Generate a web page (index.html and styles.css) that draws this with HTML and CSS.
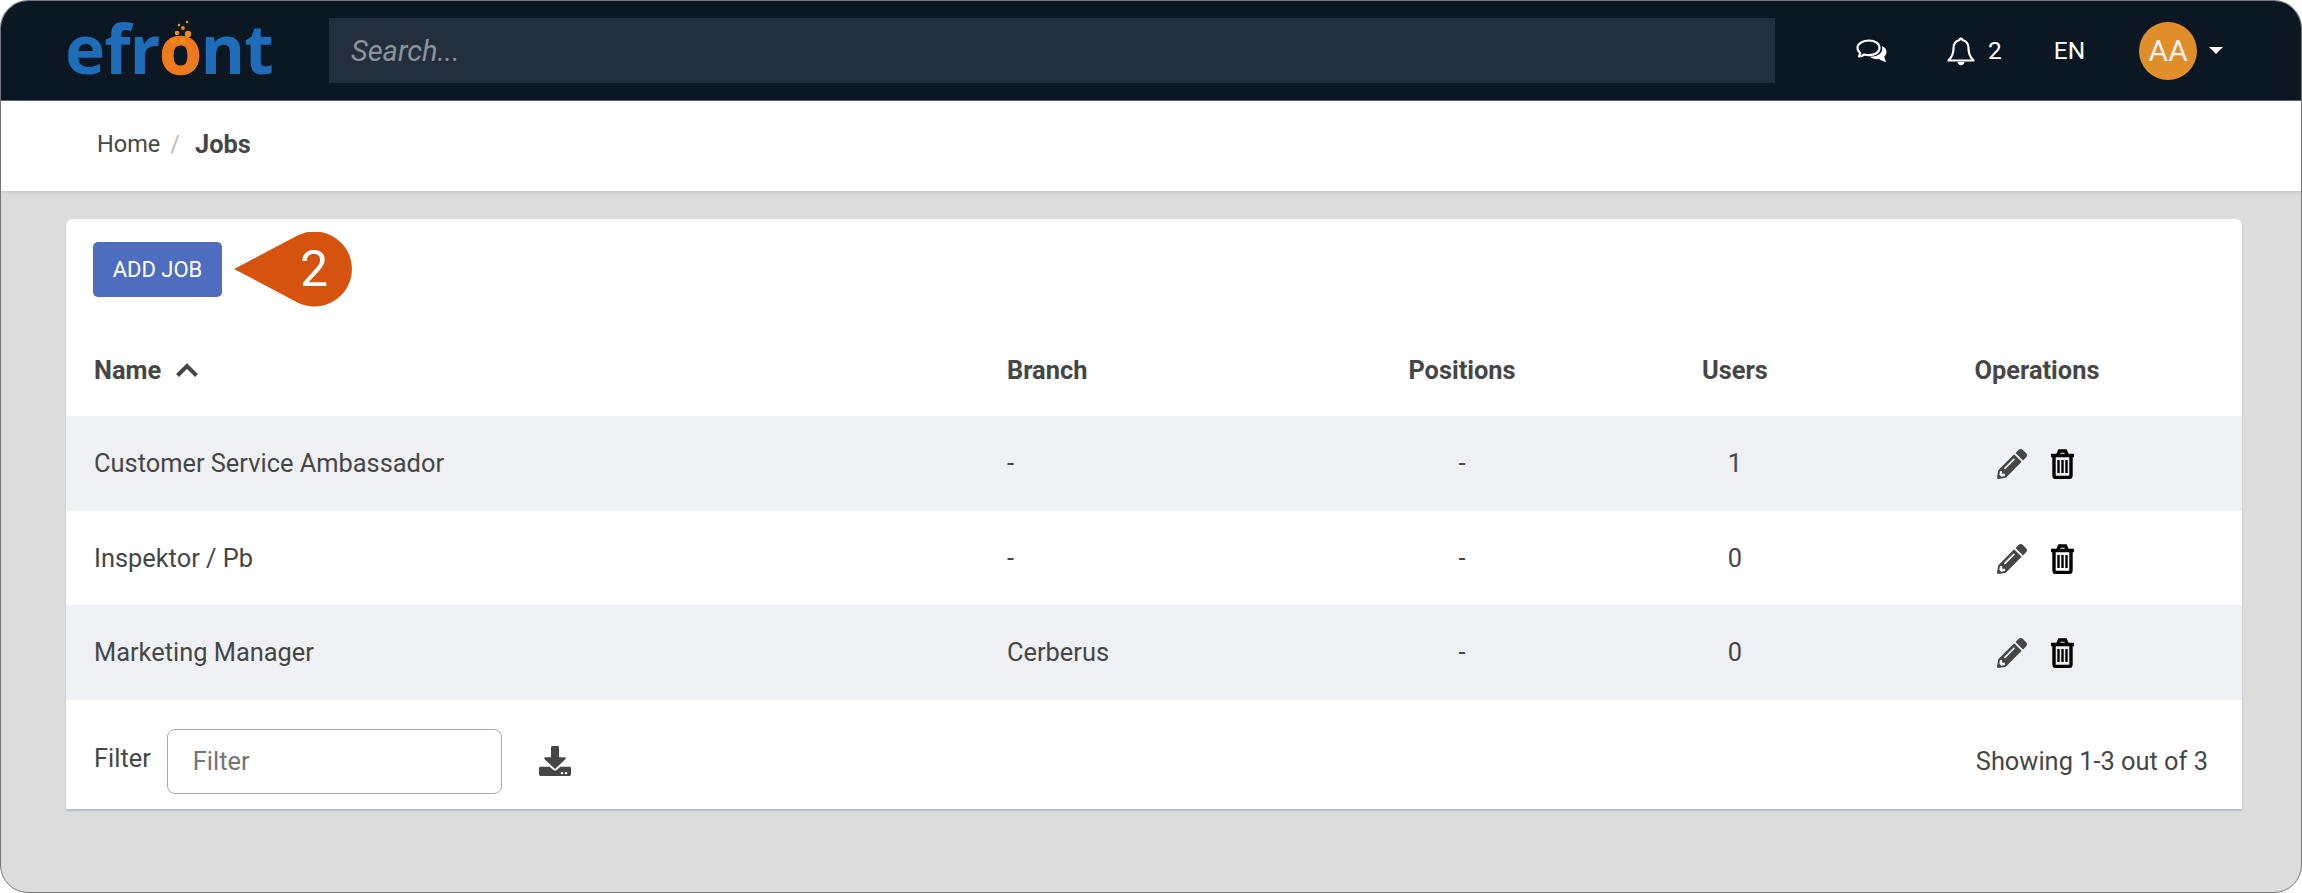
FILE: index.html
```html
<!DOCTYPE html>
<html lang="en">
<head>
<meta charset="utf-8">
<title>Jobs</title>
<link rel="stylesheet" href="styles.css">
</head>
<body>
<div class="frame">
  <header class="topbar">
    <div class="logo">
      <span class="logo-text">efr<span class="logo-o">o</span>nt</span>
      <svg class="logo-dots" viewBox="0 0 40 30" aria-hidden="true">
        <circle cx="29" cy="16" r="3.200"/><circle cx="18" cy="15" r="2.300"/><circle cx="24" cy="10" r="1.900"/><circle cx="20" cy="7" r="1.300"/><circle cx="28" cy="4" r="1.300"/>
        <circle cx="14" cy="23" r="3"/><circle cx="24" cy="23" r="3"/>
      </svg>
    </div>
    <div class="search">Search...</div>
    <div class="top-actions">
      <svg class="ic-comments" viewBox="0 0 32 24" aria-hidden="true">
        <path class="ic-line" d="M13 1.500C6.800 1.500 1.500 4.500 1.500 9c0 2 1 3.700 2.600 5L3 17.500c2.200-.3 3.900-1.100 5.200-2 1.500.4 3.100.6 4.800.6 6.200 0 10.500-3 10.500-7.100S19.200 1.500 13 1.500z"/>
        <path class="ic-fill" d="M26 7c3.200 1.300 4.500 3.500 4.500 6 0 1.900-.9 3.400-2.300 4.600l1.800 5.400c-2.800-.5-5.200-1.700-7-3-2.800.5-6.800-.1-9-2.400 7 .2 14-3 12-10.600z"/>
      </svg>
      <div class="bell-group">
        <svg class="ic-bell" viewBox="0 0 28 30" aria-hidden="true">
          <path class="ic-line" d="M14 2.500c-1 0-1.500.8-1.500 1.500C8 5 6.500 8.500 6.500 12.500c0 5-1.500 8.500-5 12h25c-3.500-3.500-5-7-5-12 0-4-1.500-7.500-6-8.500 0-.7-.5-1.500-1.500-1.500z"/>
          <path class="ic-fill" d="M10.500 26h7c-.3 2-1.700 3.200-3.500 3.200S10.800 28 10.500 26z"/>
        </svg>
        <span class="top-text">2</span>
      </div>
      <span class="top-text lang">EN</span>
      <div class="user">
        <span class="avatar">AA</span>
        <span class="caret"></span>
      </div>
    </div>
  </header>

  <nav class="crumbs">
    <span class="crumb">Home</span>
    <span class="crumb-sep">/</span>
    <strong class="crumb-current">Jobs</strong>
  </nav>

  <main class="content">
    <section class="card">
      <div class="card-top">
        <button class="btn-add" type="button">ADD JOB</button>
        <div class="callout">
          <svg class="callout-shape" viewBox="0 0 119 76" aria-hidden="true">
            <path d="M0 37 L63 3.800 A37.500 37.500 0 1 1 63 70.200 Z"/>
          </svg>
          <span class="callout-num">2</span>
        </div>
      </div>

      <div class="row row-head">
        <div class="name-head">Name
          <svg class="sort" viewBox="0 0 24 16" aria-hidden="true"><path d="M2.500 13.500 12 4l9.500 9.500"/></svg>
        </div>
        <div>Branch</div>
        <div class="center">Positions</div>
        <div class="center">Users</div>
        <div class="center">Operations</div>
      </div>

      <div class="row row-alt">
        <div>Customer Service Ambassador</div><div>-</div><div class="center">-</div><div class="center">1</div>
        <div class="ops">
          <svg class="ic-pencil" viewBox="0 0 512 512" aria-hidden="true"><path d="M497.900 142.100l-46.100 46.100c-4.700 4.700-12.300 4.700-17 0l-111-111c-4.700-4.700-4.700-12.300 0-17l46.100-46.100c18.700-18.700 49.100-18.700 67.900 0l60.100 60.100c18.800 18.700 18.800 49.100 0 67.900zM284.200 99.800L21.600 362.400.4 483.900c-2.900 16.400 11.400 30.600 27.800 27.800l121.500-21.300 262.600-262.600c4.700-4.700 4.700-12.300 0-17l-111-111c-4.800-4.700-12.400-4.700-17.100 0zM124.100 339.900c-5.500-5.500-5.500-14.300 0-19.800l154-154c5.500-5.500 14.300-5.500 19.800 0s5.500 14.300 0 19.800l-154 154c-5.500 5.500-14.300 5.500-19.800 0zM88 424h48v36.300l-64.500 11.300-31.100-31.100L51.700 376H88v48z"/></svg>
          <svg class="ic-trash" viewBox="0 0 23 30" aria-hidden="true"><path d="M7 5.500 8.500 2h6L16 5.500M0 6.500h23M3 7v19.500a2 2 0 0 0 2 2h13a2 2 0 0 0 2-2V7"/><path class="trash-bars" d="M7.500 11v13M11.500 11v13M15.500 11v13"/></svg>
        </div>
      </div>
      <div class="row">
        <div>Inspektor / Pb</div><div>-</div><div class="center">-</div><div class="center">0</div>
        <div class="ops">
          <svg class="ic-pencil" viewBox="0 0 512 512" aria-hidden="true"><path d="M497.900 142.100l-46.100 46.100c-4.700 4.700-12.300 4.700-17 0l-111-111c-4.700-4.700-4.700-12.300 0-17l46.100-46.100c18.700-18.700 49.100-18.700 67.900 0l60.100 60.100c18.800 18.700 18.800 49.100 0 67.900zM284.200 99.800L21.600 362.400.4 483.900c-2.900 16.400 11.400 30.600 27.800 27.800l121.500-21.300 262.600-262.600c4.700-4.700 4.700-12.300 0-17l-111-111c-4.800-4.700-12.400-4.700-17.100 0zM124.100 339.900c-5.500-5.500-5.500-14.300 0-19.800l154-154c5.500-5.500 14.300-5.500 19.800 0s5.500 14.300 0 19.800l-154 154c-5.500 5.500-14.300 5.500-19.800 0zM88 424h48v36.300l-64.500 11.300-31.100-31.100L51.700 376H88v48z"/></svg>
          <svg class="ic-trash" viewBox="0 0 23 30" aria-hidden="true"><path d="M7 5.500 8.500 2h6L16 5.500M0 6.500h23M3 7v19.500a2 2 0 0 0 2 2h13a2 2 0 0 0 2-2V7"/><path class="trash-bars" d="M7.500 11v13M11.500 11v13M15.500 11v13"/></svg>
        </div>
      </div>
      <div class="row row-alt">
        <div>Marketing Manager</div><div>Cerberus</div><div class="center">-</div><div class="center">0</div>
        <div class="ops">
          <svg class="ic-pencil" viewBox="0 0 512 512" aria-hidden="true"><path d="M497.900 142.100l-46.100 46.100c-4.700 4.700-12.300 4.700-17 0l-111-111c-4.700-4.700-4.700-12.300 0-17l46.100-46.100c18.700-18.700 49.100-18.700 67.900 0l60.100 60.100c18.800 18.700 18.800 49.100 0 67.900zM284.200 99.800L21.600 362.400.4 483.900c-2.900 16.400 11.400 30.600 27.800 27.800l121.500-21.300 262.600-262.600c4.700-4.700 4.700-12.300 0-17l-111-111c-4.800-4.700-12.400-4.700-17.100 0zM124.100 339.900c-5.500-5.500-5.500-14.300 0-19.800l154-154c5.500-5.500 14.300-5.500 19.800 0s5.500 14.300 0 19.800l-154 154c-5.500 5.500-14.300 5.500-19.800 0zM88 424h48v36.300l-64.500 11.300-31.100-31.100L51.700 376H88v48z"/></svg>
          <svg class="ic-trash" viewBox="0 0 23 30" aria-hidden="true"><path d="M7 5.500 8.500 2h6L16 5.500M0 6.500h23M3 7v19.500a2 2 0 0 0 2 2h13a2 2 0 0 0 2-2V7"/><path class="trash-bars" d="M7.500 11v13M11.500 11v13M15.500 11v13"/></svg>
        </div>
      </div>

      <div class="card-foot">
        <span class="filter-label">Filter</span>
        <input class="filter-input" type="text" placeholder="Filter">
        <svg class="ic-download" viewBox="0 0 512 512" preserveAspectRatio="none" aria-hidden="true"><path d="M216 0h80c13.300 0 24 10.700 24 24v168h87.700c17.800 0 26.700 21.500 14.100 34.100L269.700 378.300c-7.500 7.500-19.800 7.500-27.300 0L90.100 226.100c-12.600-12.600-3.700-34.100 14.100-34.100H192V24c0-13.300 10.700-24 24-24zm296 376v112c0 13.300-10.700 24-24 24H24c-13.300 0-24-10.700-24-24V376c0-13.300 10.700-24 24-24h146.700l49 49c20.100 20.100 52.500 20.100 72.600 0l49-49H488c13.300 0 24 10.700 24 24zm-124 88c0-11-9-20-20-20s-20 9-20 20 9 20 20 20 20-9 20-20zm64 0c0-11-9-20-20-20s-20 9-20 20 9 20 20 20 20-9 20-20z"/></svg>
        <span class="showing">Showing 1-3 out of 3</span>
      </div>
    </section>
  </main>
</div>
</body>
</html>
```

FILE: styles.css
```css
* { box-sizing: border-box; }
html, body { margin: 0; padding: 0; background: #fff; }
body { font-family: Roboto, "Liberation Sans", sans-serif; color: #464646; font-size: 25.400px; }

.frame {
  width: 2302px; height: 893px;
  border: 1px solid #777; border-radius: 28px;
  overflow: hidden; display: flex; flex-direction: column;
  background: #dcdcdc;
}

.topbar {
  height: 100px; flex: none; background: #0b1824;
  border-bottom: 1px solid #666;
  display: flex; align-items: center;
}
.logo { width: 328px; flex: none; padding-left: 64px; position: relative; height: 100%; }
.logo-text {
  display: block; font-family: "Open Sans", sans-serif; font-weight: 700;
  font-size: 68px; line-height: 100px; letter-spacing: -1px; color: #1f6cb8; margin-top: -3px;
}
.logo-o {
  color: #ee7a1f; -webkit-text-stroke: 1.500px #ee7a1f;
}
.logo-dots { position: absolute; left: 158px; top: 17px; width: 40px; height: 30px; fill: #f28c1c; }

.search {
  width: 1446px; height: 65px; flex: none; background: #232f3c;
  color: #8c949b; font-style: italic; font-size: 29px;
  display: flex; align-items: center; padding-left: 22px;
}
.top-actions { flex: 1; position: relative; display: flex; align-items: center; padding-left: 81px; }
.ic-line { fill: none; stroke: #fff; stroke-width: 2.200; stroke-linejoin: round; }
.ic-fill { fill: #fff; }
.ic-comments { width: 32px; height: 24px; flex: none; }
.bell-group { display: flex; align-items: center; gap: 13px; margin-left: 59px; }
.ic-bell { width: 28px; height: 30px; flex: none; }
.top-text { color: #fff; font-size: 24.500px; }
.lang { margin-left: 52px; }
.user { display: flex; align-items: center; gap: 12px; margin-left: 54px; }
.avatar {
  width: 58px; height: 58px; border-radius: 50%; background: #e08e2a; color: #f2f2f2;
  font-size: 30px; display: flex; align-items: center; justify-content: center;
}
.caret { width: 0; height: 0; border-left: 7px solid transparent; border-right: 7px solid transparent; border-top: 7px solid #fff; }

.crumbs {
  height: 90px; flex: none; background: #fff; font-size: 23.500px;
  box-shadow: 0 1px 4px rgba(0,0,0,.12);
  display: flex; align-items: center; padding-left: 96px; padding-bottom: 4px;
}
.crumb-sep { color: #bbb; margin: 0 15px 0 10px; }
.crumb-current { font-weight: 700; font-size: 25.400px; }

.content { flex: 1; padding: 28px 59px 0 65px; }
.card {
  background: #fff; border-radius: 6px 6px 0 0; height: 590px;
  box-shadow: 0 2px 2px rgba(150,160,190,.55);
  display: flex; flex-direction: column;
}
.card-top { height: 77px; flex: none; padding: 23px 0 0 27px; position: relative; }
.btn-add {
  width: 129px; height: 55px; border: 0; border-radius: 5px; background: #4f6dbf; color: #fff;
  font-family: inherit; font-size: 22px; padding: 0;
}
.callout { position: absolute; left: 168px; top: 13px; width: 119px; height: 76px; }
.callout-shape { display: block; width: 119px; height: 76px; fill: #d6530f; }
.callout-num {
  position: absolute; left: 48px; top: 0; width: 64px; height: 74px;
  display: flex; align-items: center; justify-content: center;
  color: #fff; font-size: 50px; font-weight: 400;
}

.row {
  display: grid; grid-template-columns: 913px 349px 212px 334px 270px;
  align-items: center; height: 94.500px; flex: none; padding-left: 28px;
}
.row-head { height: 120px; font-weight: 700; padding-top: 28px; }
.row-alt { background: #eef0f4; }
.center { text-align: center; }
.name-head { display: flex; align-items: center; gap: 14px; }
.sort { width: 24px; height: 16px; fill: none; stroke: #464646; stroke-width: 4; }
.ops { display: flex; align-items: center; justify-content: center; gap: 24px; padding: 2px 4px 0 0; }
.ic-pencil { width: 30px; height: 30px; fill: #464646; flex: none; }
.ic-trash { width: 23px; height: 30px; fill: none; stroke: #000; stroke-width: 3.400; flex: none; }
.trash-bars { stroke-width: 2.400; }

.card-foot { flex: 1; display: flex; align-items: center; padding: 14px 34px 0 28px; }
.filter-label { margin-right: 16px; padding-bottom: 6px; }
.filter-input {
  width: 335px; height: 65px; border: 1px solid #aaa; border-radius: 8px; outline: 0;
  padding: 0 25px; font-family: inherit; font-size: 25.400px; background: #fff;
}
.filter-input::placeholder { color: #757575; opacity: 1; }
.ic-download { width: 32px; height: 30px; fill: #464646; margin-left: 37px; flex: none; }
.showing { margin-left: auto; }
```
